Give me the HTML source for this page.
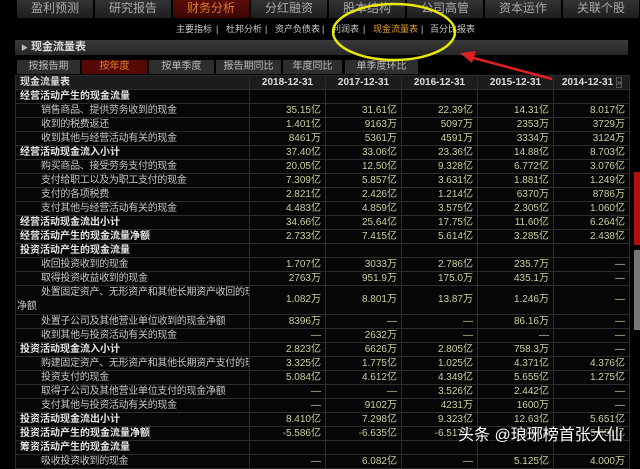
<!DOCTYPE html>
<html><head><meta charset="utf-8"><style>
*{margin:0;padding:0;box-sizing:border-box}
body{width:640px;height:457px;background:#000;overflow:hidden;position:relative;font-family:"Liberation Sans","Noto Sans CJK SC",sans-serif;color:#ccc}
.nav{position:absolute;top:0;height:18px;width:76px;background:linear-gradient(#333,#1e1e1e);color:#aaa;font-size:12px;text-align:center;line-height:16px}
.nav.act{background:linear-gradient(#5a0c08,#3a0604);color:#e07a2a}
.sub{position:absolute;top:23px;font-size:9px;color:#ccc;line-height:12px;white-space:nowrap}
.bar{position:absolute;left:15px;top:40px;width:613px;height:15px;background:linear-gradient(#3a3a3a,#262626);font-size:11px;color:#ddd;line-height:15px;padding-left:6px;font-weight:bold}
.tab{position:absolute;top:60px;height:14px;background:#2e2e2e;color:#bbb;font-size:10px;text-align:center;line-height:14px}
.tab.act{background:#560a06;color:#e07a2a}
table{position:absolute;left:15px;top:75px;width:614px;border-collapse:collapse;table-layout:fixed;font-size:10px}
td{height:14px;line-height:12px;border:1px solid #2c2c2c;padding:0 4px;white-space:nowrap;overflow:hidden;background:#060606}
td.v{text-align:right;color:#cfcf9a;padding-right:4px}
tr.h td{background:#1c1c1c;color:#ddd;font-weight:bold;text-align:center}
tr.h td:first-child{text-align:left}
tr.s td:first-child{font-weight:bold;color:#e6e6e6;padding-left:4px}
td.i{padding-left:25px;color:#c8c8c8;letter-spacing:-0.3px}
tr.d td{height:28px}
</style></head><body>
<div class="nav" style="left:17px">盈利预测</div>
<div class="nav" style="left:95px">研究报告</div>
<div class="nav act" style="left:173px">财务分析</div>
<div class="nav" style="left:251px">分红融资</div>
<div class="nav" style="left:329px">股本结构</div>
<div class="nav" style="left:407px">公司高管</div>
<div class="nav" style="left:485px">资本运作</div>
<div class="nav" style="left:563px">关联个股</div>

<div class="sub" style="left:176px">主要指标</div><div class="sub" style="left:216px">|</div>
<div class="sub" style="left:226px">杜邦分析</div><div class="sub" style="left:265px">|</div>
<div class="sub" style="left:275px">资产负债表</div><div class="sub" style="left:322px">|</div>
<div class="sub" style="left:332px">利润表</div><div class="sub" style="left:363px">|</div>
<div class="sub" style="left:373px;color:#e8a030">现金流量表</div><div class="sub" style="left:421px">|</div>
<div class="sub" style="left:430px">百分比报表</div>

<div class="bar"><span style="font-size:7px;color:#bbb">▶</span> 现金流量表</div>

<div class="tab" style="left:17px;width:63px">按报告期</div>
<div class="tab act" style="left:82px;width:65px">按年度</div>
<div class="tab" style="left:149px;width:65px">按单季度</div>
<div class="tab" style="left:216px;width:65px">报告期同比</div>
<div class="tab" style="left:283px;width:59px">年度同比</div>
<div class="tab" style="left:345px;width:73px">单季度环比</div>

<table>
<colgroup><col style="width:234px"><col style="width:76px"><col style="width:76px"><col style="width:76px"><col style="width:76px"><col style="width:76px"></colgroup>
<tr class="h"><td>现金流量表</td><td>2018-12-31</td><td>2017-12-31</td><td>2016-12-31</td><td>2015-12-31</td><td style="text-align:left;padding-left:8px">2014-12-31 <span style="font-size:8px;border:1px solid #555;color:#888;font-weight:normal">»</span></td></tr>
<tr class="s"><td>经营活动产生的现金流量</td><td></td><td></td><td></td><td></td><td></td></tr>
<tr><td class="i">销售商品、提供劳务收到的现金</td><td class="v">35.15亿</td><td class="v">31.61亿</td><td class="v">22.39亿</td><td class="v">14.31亿</td><td class="v">8.017亿</td></tr>
<tr><td class="i">收到的税费返还</td><td class="v">1.401亿</td><td class="v">9163万</td><td class="v">5097万</td><td class="v">2353万</td><td class="v">3729万</td></tr>
<tr><td class="i">收到其他与经营活动有关的现金</td><td class="v">8461万</td><td class="v">5361万</td><td class="v">4591万</td><td class="v">3334万</td><td class="v">3124万</td></tr>
<tr class="s"><td>经营活动现金流入小计</td><td class="v">37.40亿</td><td class="v">33.06亿</td><td class="v">23.36亿</td><td class="v">14.88亿</td><td class="v">8.703亿</td></tr>
<tr><td class="i">购买商品、接受劳务支付的现金</td><td class="v">20.05亿</td><td class="v">12.50亿</td><td class="v">9.328亿</td><td class="v">6.772亿</td><td class="v">3.076亿</td></tr>
<tr><td class="i">支付给职工以及为职工支付的现金</td><td class="v">7.309亿</td><td class="v">5.857亿</td><td class="v">3.631亿</td><td class="v">1.881亿</td><td class="v">1.249亿</td></tr>
<tr><td class="i">支付的各项税费</td><td class="v">2.821亿</td><td class="v">2.426亿</td><td class="v">1.214亿</td><td class="v">6370万</td><td class="v">8786万</td></tr>
<tr><td class="i">支付其他与经营活动有关的现金</td><td class="v">4.483亿</td><td class="v">4.859亿</td><td class="v">3.575亿</td><td class="v">2.305亿</td><td class="v">1.060亿</td></tr>
<tr class="s"><td>经营活动现金流出小计</td><td class="v">34.66亿</td><td class="v">25.64亿</td><td class="v">17.75亿</td><td class="v">11.60亿</td><td class="v">6.264亿</td></tr>
<tr class="s"><td>经营活动产生的现金流量净额</td><td class="v">2.733亿</td><td class="v">7.415亿</td><td class="v">5.614亿</td><td class="v">3.285亿</td><td class="v">2.438亿</td></tr>
<tr class="s"><td>投资活动产生的现金流量</td><td></td><td></td><td></td><td></td><td></td></tr>
<tr><td class="i">收回投资收到的现金</td><td class="v">1.707亿</td><td class="v">3033万</td><td class="v">2.786亿</td><td class="v">235.7万</td><td class="v">—</td></tr>
<tr><td class="i">取得投资收益收到的现金</td><td class="v">2763万</td><td class="v">951.9万</td><td class="v">175.0万</td><td class="v">435.1万</td><td class="v">—</td></tr>
<tr class="d"><td style="padding-left:1px;color:#c8c8c8;line-height:14px;letter-spacing:-0.3px"><span style="padding-left:24px">处置固定资产、无形资产和其他长期资产收回的现金</span><br>净额</td><td class="v">1.082万</td><td class="v">8.801万</td><td class="v">13.87万</td><td class="v">1.246万</td><td class="v">—</td></tr>
<tr><td class="i">处置子公司及其他营业单位收到的现金净额</td><td class="v">8396万</td><td class="v">—</td><td class="v">—</td><td class="v">86.16万</td><td class="v">—</td></tr>
<tr><td class="i">收到其他与投资活动有关的现金</td><td class="v">—</td><td class="v">2632万</td><td class="v">—</td><td class="v">—</td><td class="v">—</td></tr>
<tr class="s"><td>投资活动现金流入小计</td><td class="v">2.823亿</td><td class="v">6626万</td><td class="v">2.805亿</td><td class="v">758.3万</td><td class="v">—</td></tr>
<tr><td class="i">购建固定资产、无形资产和其他长期资产支付的现金</td><td class="v">3.325亿</td><td class="v">1.775亿</td><td class="v">1.025亿</td><td class="v">4.371亿</td><td class="v">4.376亿</td></tr>
<tr><td class="i">投资支付的现金</td><td class="v">5.084亿</td><td class="v">4.612亿</td><td class="v">4.349亿</td><td class="v">5.655亿</td><td class="v">1.275亿</td></tr>
<tr><td class="i">取得子公司及其他营业单位支付的现金净额</td><td class="v">—</td><td class="v">—</td><td class="v">3.526亿</td><td class="v">2.442亿</td><td class="v">—</td></tr>
<tr><td class="i">支付其他与投资活动有关的现金</td><td class="v">—</td><td class="v">9102万</td><td class="v">4231万</td><td class="v">1600万</td><td class="v">—</td></tr>
<tr class="s"><td>投资活动现金流出小计</td><td class="v">8.410亿</td><td class="v">7.298亿</td><td class="v">9.323亿</td><td class="v">12.63亿</td><td class="v">5.651亿</td></tr>
<tr class="s"><td>投资活动产生的现金流量净额</td><td class="v">-5.586亿</td><td class="v">-6.635亿</td><td class="v">-6.517亿</td><td class="v">-9.343亿</td><td class="v">-5.651亿</td></tr>
<tr class="s"><td>筹资活动产生的现金流量</td><td></td><td></td><td></td><td></td><td></td></tr>
<tr><td class="i">吸收投资收到的现金</td><td class="v">—</td><td class="v">6.082亿</td><td class="v">—</td><td class="v">5.125亿</td><td class="v">4.000万</td></tr>
</table>

<div style="position:absolute;left:634px;top:172px;width:6px;height:73px;background:#b01010"></div>
<div style="position:absolute;left:634px;top:250px;width:6px;height:80px;background:#777"></div>

<svg style="position:absolute;left:0;top:0" width="640" height="457">
<ellipse cx="394" cy="32" rx="61" ry="28" fill="none" stroke="#e8e800" stroke-width="2.5"/>
<line x1="552" y1="79" x2="470" y2="57" stroke="#e02020" stroke-width="2.5"/>
<polygon points="460,53 476,51 472,63" fill="#e02020"/>
</svg>
<div style="position:absolute;left:458px;top:421px;font-size:16px;color:#fff;font-family:'Liberation Sans','Noto Sans CJK SC',sans-serif;text-shadow:0 0 3px #000,1px 1px 2px #000;white-space:nowrap">头条 @琅琊榜首张大仙</div>
</body></html>
